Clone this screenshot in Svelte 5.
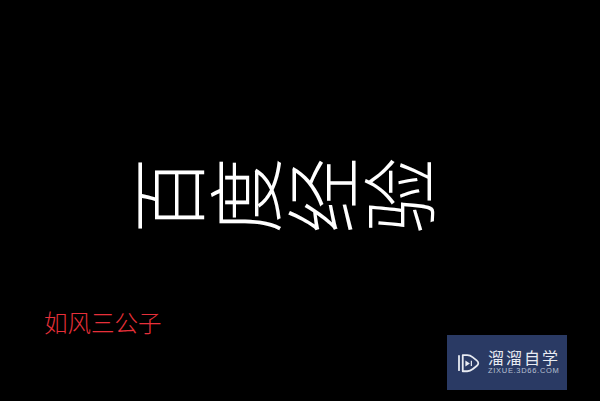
<script>
  const glyphs = ['百', '度', '经', '验'];
</script>

<main class="page">
  <h1 class="title">
    {#each glyphs as g}
      <span class="glyph">{g}</span>
    {/each}
  </h1>
  <footer class="foot">
    <p class="author">如风三公子</p>
    <div class="mark">
      <svg class="logo" viewBox="0 0 34 32" width="26" height="24" fill="none" stroke="#e8ebf2">
        <path d="M5 6.5 V25.5" stroke-width="2.4" stroke-linecap="round" />
        <path d="M10 5.5 H16 C19 5.5 21 6.5 23.5 8.5 L28.5 12.5 C31.5 15 31.5 17.5 28.5 20 L23.5 24 C21 26 19 27 16 27 H10 Z" stroke-width="2.4" stroke-linejoin="round" />
        <path d="M13.5 12.5 V20.5 L19.5 16.5 Z" fill="#e8ebf2" stroke="none" />
        <path d="M21.5 13 V20" stroke-width="1.6" />
      </svg>
      <div class="brand">
        <span class="cn">溜溜自学</span>
        <span class="en">ZIXUE.3D66.COM</span>
      </div>
    </div>
  </footer>
</main>

<style>
  :global(body) {
    margin: 0;
    background: #000;
  }
  .page {
    width: 600px;
    height: 401px;
    background: #000;
    display: flex;
    flex-direction: column;
    box-sizing: border-box;
    padding-top: 157px;
    overflow: hidden;
  }
  .title {
    margin: 0 0 0 127px;
    display: flex;
    gap: 2px;
    font: 300 76px/78px "Noto Sans CJK SC", sans-serif;
    color: #fff;
    height: 78px;
  }
  .glyph {
    display: block;
    width: 75px;
    height: 78px;
    text-align: center;
    transform: rotate(-90deg);
  }
  .foot {
    display: flex;
    justify-content: space-between;
    align-items: flex-start;
    margin-top: 72px;
    padding: 0 33px 0 44px;
  }
  .author {
    margin: 0;
    font: 300 23.5px/30px "Noto Sans CJK SC", sans-serif;
    color: #e8303a;
    width: 120px;
    white-space: nowrap;
  }
  .mark {
    width: 120px;
    height: 55px;
    margin-top: 28px;
    background: #2a3a64;
    display: flex;
    align-items: center;
    gap: 7px;
    box-sizing: border-box;
    padding-left: 8px;
  }
  .brand {
    display: flex;
    flex-direction: column;
    gap: 1px;
    color: #e8ebf2;
    font-family: "Noto Sans CJK SC", sans-serif;
  }
  .cn {
    font-size: 16px;
    line-height: 16px;
    letter-spacing: 2px;
    white-space: nowrap;
  }
  .en {
    font: 400 7.5px/10px "Liberation Sans", sans-serif;
    letter-spacing: 0.7px;
    color: #b9c0d2;
    white-space: nowrap;
  }
</style>
